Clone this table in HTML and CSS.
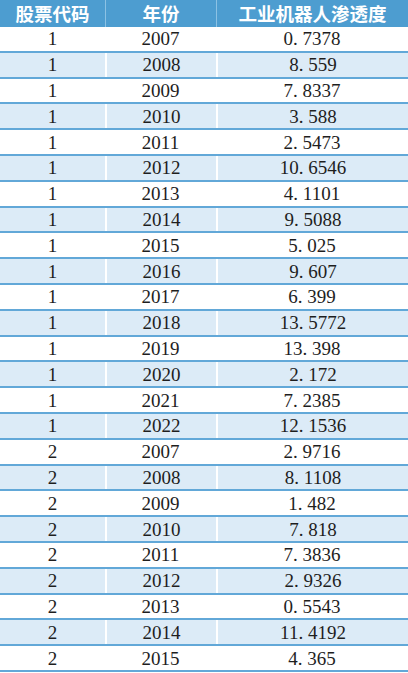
FILE: index.html
```html
<!DOCTYPE html>
<html lang="zh">
<head>
<meta charset="utf-8">
<link rel="stylesheet" href="styles.css">
</head>
<body>
<div class="table">
  <div class="row head"><div class="cell">股票代码</div><div class="cell">年份</div><div class="cell">工业机器人渗透度</div></div>
  <div class="row"><div class="cell">1</div><div class="cell">2007</div><div class="cell">0<span class="dot">.</span>7378</div></div>
  <div class="row alt"><div class="cell">1</div><div class="cell">2008</div><div class="cell">8<span class="dot">.</span>559</div></div>
  <div class="row"><div class="cell">1</div><div class="cell">2009</div><div class="cell">7<span class="dot">.</span>8337</div></div>
  <div class="row alt"><div class="cell">1</div><div class="cell">2010</div><div class="cell">3<span class="dot">.</span>588</div></div>
  <div class="row"><div class="cell">1</div><div class="cell">2011</div><div class="cell">2<span class="dot">.</span>5473</div></div>
  <div class="row alt"><div class="cell">1</div><div class="cell">2012</div><div class="cell">10<span class="dot">.</span>6546</div></div>
  <div class="row"><div class="cell">1</div><div class="cell">2013</div><div class="cell">4<span class="dot">.</span>1101</div></div>
  <div class="row alt"><div class="cell">1</div><div class="cell">2014</div><div class="cell">9<span class="dot">.</span>5088</div></div>
  <div class="row"><div class="cell">1</div><div class="cell">2015</div><div class="cell">5<span class="dot">.</span>025</div></div>
  <div class="row alt"><div class="cell">1</div><div class="cell">2016</div><div class="cell">9<span class="dot">.</span>607</div></div>
  <div class="row"><div class="cell">1</div><div class="cell">2017</div><div class="cell">6<span class="dot">.</span>399</div></div>
  <div class="row alt"><div class="cell">1</div><div class="cell">2018</div><div class="cell">13<span class="dot">.</span>5772</div></div>
  <div class="row"><div class="cell">1</div><div class="cell">2019</div><div class="cell">13<span class="dot">.</span>398</div></div>
  <div class="row alt"><div class="cell">1</div><div class="cell">2020</div><div class="cell">2<span class="dot">.</span>172</div></div>
  <div class="row"><div class="cell">1</div><div class="cell">2021</div><div class="cell">7<span class="dot">.</span>2385</div></div>
  <div class="row alt"><div class="cell">1</div><div class="cell">2022</div><div class="cell">12<span class="dot">.</span>1536</div></div>
  <div class="row"><div class="cell">2</div><div class="cell">2007</div><div class="cell">2<span class="dot">.</span>9716</div></div>
  <div class="row alt"><div class="cell">2</div><div class="cell">2008</div><div class="cell">8<span class="dot">.</span>1108</div></div>
  <div class="row"><div class="cell">2</div><div class="cell">2009</div><div class="cell">1<span class="dot">.</span>482</div></div>
  <div class="row alt"><div class="cell">2</div><div class="cell">2010</div><div class="cell">7<span class="dot">.</span>818</div></div>
  <div class="row"><div class="cell">2</div><div class="cell">2011</div><div class="cell">7<span class="dot">.</span>3836</div></div>
  <div class="row alt"><div class="cell">2</div><div class="cell">2012</div><div class="cell">2<span class="dot">.</span>9326</div></div>
  <div class="row"><div class="cell">2</div><div class="cell">2013</div><div class="cell">0<span class="dot">.</span>5543</div></div>
  <div class="row alt"><div class="cell">2</div><div class="cell">2014</div><div class="cell">11<span class="dot">.</span>4192</div></div>
  <div class="row"><div class="cell">2</div><div class="cell">2015</div><div class="cell">4<span class="dot">.</span>365</div></div>
</div>
</body>
</html>
```
FILE: styles.css
```css
html, body {
  margin: 0;
  padding: 0;
  background: #ffffff;
}

.table {
  width: 408px;
  display: flex;
  flex-direction: column;
}

.row {
  display: grid;
  grid-template-columns: 105px 111px 1fr;
  height: 25.8px;
  box-sizing: border-box;
  border-bottom: 2px solid #62a8d8;
  background: #ffffff;
  font-family: "Liberation Serif", "Noto Sans CJK SC", serif;
  font-size: 19px;
  color: #1e1e1e;
}

.row.alt {
  background: #dcebf7;
}

.row.alt .cell + .cell {
  border-left: 2px solid #ffffff;
}

.cell {
  display: flex;
  align-items: center;
  justify-content: center;
  line-height: 1;
  white-space: nowrap;
}

.dot {
  display: inline-block;
  width: 0.5em;
  text-align: left;
}

.row.head {
  height: 27px;
  border-bottom: none;
  background: #4d9dd0;
  color: #ffffff;
  font-family: "Noto Sans CJK SC", sans-serif;
  font-weight: 700;
  font-size: 18.5px;
}

.row.head .cell {
  line-height: 27px;
}

.row.head .cell + .cell {
  border-left: 1px solid #8cc2e4;
}
```
